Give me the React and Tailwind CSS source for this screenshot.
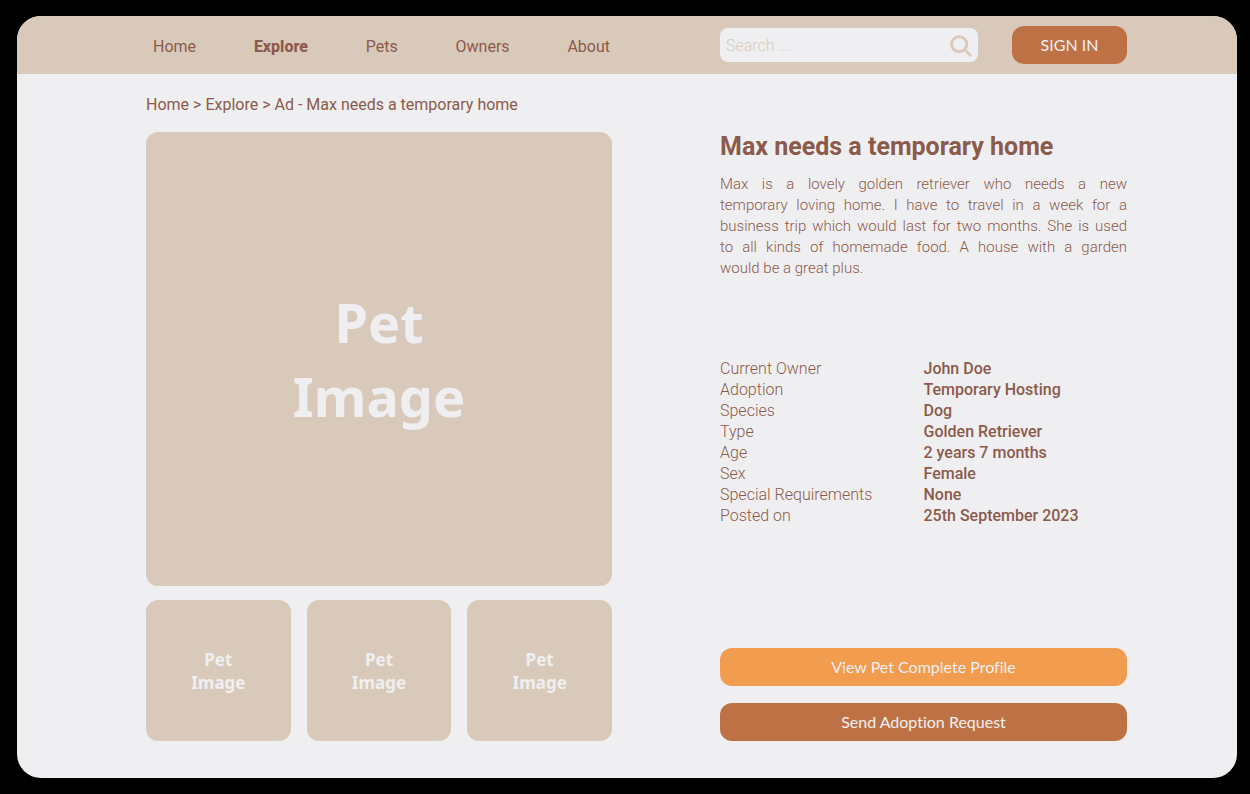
const NAV = ["Home", "Explore", "Pets", "Owners", "About"];

const DESCRIPTION =
  "Max is a lovely golden retriever who needs a new temporary\u00a0loving home. I have to travel in a week for a business\u00a0trip which would last for two months. She is used to\u00a0all kinds of homemade food. A house with a garden would\u00a0be a great plus.";

const DETAILS = [
  ["Current Owner", "John Doe"],
  ["Adoption", "Temporary Hosting"],
  ["Species", "Dog"],
  ["Type", "Golden Retriever"],
  ["Age", "2 years 7 months"],
  ["Sex", "Female"],
  ["Special Requirements", "None"],
  ["Posted on", "25th September 2023"],
];

function SearchIcon() {
  return (
    <svg viewBox="0 0 22 22" className="size-[22px]" fill="none" stroke="currentColor" strokeWidth="2.8" aria-hidden="true">
      <circle cx="9.2" cy="9.2" r="7.6" />
      <path d="M14.6 14.6 21 21" />
    </svg>
  );
}

function Header() {
  return (
    <header className="grid h-[58px] grid-cols-[466fr_407fr] items-center gap-[108px] bg-[#d9c9ba] pr-[110px] pl-[129px]">
      <nav className="flex justify-between pt-1 pr-0.5 pl-[7px] text-base leading-5">
        {NAV.map((item) => (
          <a key={item} href="#" className={item === "Explore" ? "font-extrabold" : ""}>
            {item}
          </a>
        ))}
      </nav>
      <div className="flex items-center justify-between gap-[34px]">
        <form className="flex h-[34px] min-w-0 flex-1 items-center rounded-lg bg-[#efeff1] px-1.5 pt-0.5 text-[#d9c9ba]">
          <input
            type="text"
            aria-label="Search"
            placeholder="Search ..."
            className="min-w-0 flex-1 bg-transparent text-base leading-5 font-light outline-none placeholder:text-[#d9c9ba]"
          />
          <button type="button" aria-label="Submit search">
            <SearchIcon />
          </button>
        </form>
        <button type="button" className="h-[38px] w-[115px] rounded-xl bg-[#bf7146] font-['Lato',sans-serif] text-base text-[#efeff1]">
          SIGN IN
        </button>
      </div>
    </header>
  );
}

function Gallery() {
  return (
    <div className="flex flex-col gap-3.5 text-center font-['Noto_Sans',sans-serif] font-bold text-[#efeff1]">
      <div className="flex aspect-[466/454] items-center justify-center rounded-xl bg-[#d9c9ba] text-[54px] leading-[74px]">
        <p>
          Pet
          <br />
          Image
        </p>
      </div>
      <div className="grid grid-cols-3 gap-4">
        {[1, 2, 3].map((n) => (
          <div key={n} className="flex aspect-[145/141] items-center justify-center rounded-xl bg-[#d9c9ba] pt-0.5 text-[17px] leading-[23px]">
            <p>
              Pet
              <br />
              Image
            </p>
          </div>
        ))}
      </div>
    </div>
  );
}

function Listing() {
  return (
    <section className="flex flex-col">
      <h1 className="pt-px text-[25px] leading-7 font-bold">Max needs a temporary home</h1>
      <p className="mt-[13px] text-justify text-[15px] leading-[21px] font-light">{DESCRIPTION}</p>
      <dl className="mt-[79px] grid grid-cols-2 text-base leading-[21px]">
        {DETAILS.map(([label, value]) => (
          <div key={label} className="contents">
            <dt className="font-light">{label}</dt>
            <dd className="font-medium">{value}</dd>
          </div>
        ))}
      </dl>
      <div className="mt-auto flex flex-col gap-[17px] font-['Lato',sans-serif] text-base text-[#efeff1] [font-variant-ligatures:none]">
        <button type="button" className="h-[38px] rounded-xl bg-[#f29c50]">
          View Pet Complete Profile
        </button>
        <button type="button" className="h-[38px] rounded-xl bg-[#bf7146]">
          Send Adoption Request
        </button>
      </div>
    </section>
  );
}

export default function App() {
  return (
    <div className="flex min-h-screen flex-col bg-black pt-4 pr-[13px] pb-4 pl-[17px] font-['Roboto',sans-serif] text-[#8c5a4b]">
      <div className="flex-1 overflow-hidden rounded-3xl bg-[#efeff1]">
        <Header />
        <main className="pr-[110px] pb-9 pl-[129px]">
          <nav aria-label="Breadcrumb" className="pt-[21px] pb-[17px] text-base leading-5">
            <a href="#">Home</a> &gt; <a href="#">Explore</a> &gt; <span>Ad - Max needs a temporary home</span>
          </nav>
          <div className="grid grid-cols-[466fr_407fr] gap-[108px]">
            <Gallery />
            <Listing />
          </div>
        </main>
      </div>
    </div>
  );
}
